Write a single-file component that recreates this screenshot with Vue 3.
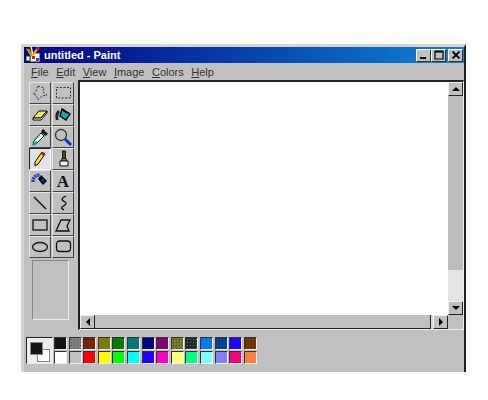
<script setup>
const menus = ['File', 'Edit', 'View', 'Image', 'Colors', 'Help']

const tools = ['free', 'select', 'eraser', 'fill', 'dropper', 'zoom', 'pencil', 'brush', 'spray', 'text', 'line', 'curve', 'rect', 'poly', 'ellipse', 'round']

const colors = [
  { c: '#141414' }, { c: '#808080', d: '#555' }, { c: '#7b2200' }, { c: '#7d7a10' }, { c: '#007c00' },
  { c: '#007878' }, { c: '#000080' }, { c: '#800070' }, { c: '#787820', d: '#444' }, { c: '#1c2c2c', d: '#3f7a7a' },
  { c: '#0078f0' }, { c: '#003f90', d: '#1060b0' }, { c: '#2000ff' }, { c: '#6a3000', d: '#a84800' },
  { c: '#ffffff' }, { c: '#c0c0c0' }, { c: '#ff0000' }, { c: '#ffff00' }, { c: '#00ff00' },
  { c: '#00ffff' }, { c: '#2000ff' }, { c: '#ff00c0' }, { c: '#ffff80' }, { c: '#00ff80' },
  { c: '#80ffff' }, { c: '#8080ff' }, { c: '#ff0080', d: '#a00050' }, { c: '#ff8040' }
]

const swatchStyle = (s) => {
  if (!s.d) return { backgroundColor: s.c }
  return {
    backgroundColor: s.c,
    backgroundImage: `radial-gradient(${s.d} 40%, transparent 45%)`,
    backgroundSize: '3px 3px'
  }
}
</script>

<template>
  <div class="page">
    <div class="window">
      <div class="titlebar">
        <svg class="app-icon" width="16" height="16" viewBox="0 0 16 16">
          <path d="M5 6h10v9H5z" fill="#fff" stroke="#222" />
          <path d="M2 1l5 8" stroke="#c8a000" stroke-width="2.600" />
          <path d="M1 1l4 0" stroke="#111" stroke-width="1.500" />
          <path d="M6 0l2 8" stroke="#f0e8c0" stroke-width="1.600" />
          <path d="M13 1L8 8" stroke="#d8b000" stroke-width="2.200" />
          <path d="M11 1l3-1 1 2-3 2z" fill="#d02020" />
          <path d="M1 9h4v5H1z" fill="#e8e8e8" stroke="#222" stroke-width=".8" />
          <rect x="7" y="9" width="3" height="3" fill="#d02020" />
          <rect x="11" y="11" width="3" height="3" fill="#1850c0" />
        </svg>
        <span class="title">untitled - Paint</span>
        <div class="caption-btns">
          <button class="cap"><svg width="10" height="10" viewBox="0 0 10 10"><rect x="1" y="7" width="6" height="2" fill="#000" /></svg></button>
          <button class="cap"><svg width="10" height="10" viewBox="0 0 10 10"><path d="M1 1h8v8H1z M1 2h8" fill="none" stroke="#000" stroke-width="1.200" /></svg></button>
          <button class="cap close"><svg width="10" height="10" viewBox="0 0 10 10"><path d="M1.500 1.500l7 7M8.500 1.500l-7 7" stroke="#000" stroke-width="1.800" /></svg></button>
        </div>
      </div>

      <div class="menubar">
        <span v-for="m in menus" :key="m" class="menu"><u>{{ m[0] }}</u>{{ m.slice(1) }}</span>
      </div>

      <div class="main">
        <div class="toolbar">
          <div class="tools">
            <button v-for="t in tools" :key="t" class="tool" :class="{ active: t === 'pencil' }">
              <span v-if="t === 'text'" class="text-tool">A</span>
              <svg v-else width="20" height="20" viewBox="0 0 20 20">
                <template v-if="t === 'free'">
                  <path d="M8 3l6 2-1 4 4 3-5 1-4 4-2-5-3-1 3-3z" fill="none" stroke="#333" stroke-dasharray="2 1.500" />
                </template>
                <template v-else-if="t === 'select'">
                  <rect x="3.500" y="4.500" width="14" height="10.500" fill="none" stroke="#333" stroke-dasharray="2 1.500" />
                </template>
                <template v-else-if="t === 'eraser'">
                  <path d="M3 13l6-7h8l-6 7z" fill="#ffee60" stroke="#000" />
                  <path d="M3 13v2h8l6-7V6l-6 7z" fill="#fff" stroke="#000" />
                </template>
                <template v-else-if="t === 'fill'">
                  <path d="M9 4l8 5-4 6-6-4z" fill="#00b0b8" stroke="#000" stroke-width="1.400" />
                  <path d="M9 4l5 4" stroke="#000" stroke-width="2" />
                  <path d="M5 5C2 8 2 12 3 15h2.500C5 12 5 9 7 7z" fill="#222" />
                </template>
                <template v-else-if="t === 'dropper'">
                  <path d="M13 2l5 5-3 2-4-4z" fill="#111" />
                  <path d="M11 6l3 3-8 8-3 1 1-4z" fill="#dff" stroke="#111" />
                  <path d="M3 18l4-3" stroke="#00b0a0" stroke-width="2.400" />
                </template>
                <template v-else-if="t === 'zoom'">
                  <circle cx="8" cy="8" r="5.500" fill="none" stroke="#333" stroke-width="1.300" />
                  <path d="M12 12l6 6" stroke="#1030c0" stroke-width="2.800" />
                </template>
                <template v-else-if="t === 'pencil'">
                  <path d="M12 3l3 2-7 10-3 2 0-4z" fill="#ffe040" stroke="#000" />
                  <path d="M12 3l3 2-1.500 2-3-2z" fill="#c02020" />
                </template>
                <template v-else-if="t === 'brush'">
                  <rect x="9.500" y="2" width="3" height="8" fill="#604800" stroke="#000" stroke-width=".8" />
                  <path d="M8.500 10h5v2h-5z" fill="#e0d020" stroke="#000" stroke-width=".8" />
                  <path d="M7 12h8v5H7z" fill="#f4f4f4" stroke="#000" />
                </template>
                <template v-else-if="t === 'spray'">
                  <path d="M3 11c0-4 2-7 7-7" fill="none" stroke="#3040c0" stroke-width="3.500" stroke-dasharray="2 .7" />
                  <path d="M11 4l6 6-4 4-5-6z" fill="#000" />
                  <path d="M12 7l3 3-2 2-2-3z" fill="#1030d0" />
                </template>
                <template v-else-if="t === 'line'">
                  <path d="M4 4l12 12" stroke="#111" stroke-width="1.400" />
                </template>
                <template v-else-if="t === 'curve'">
                  <path d="M13 3C8 5 8 7 12 9c2 1 1 3-3 5-1 1 0 2 2 3" fill="none" stroke="#111" stroke-width="1.300" />
                </template>
                <template v-else-if="t === 'rect'">
                  <rect x="3" y="5" width="14" height="10" fill="none" stroke="#111" stroke-width="1.300" />
                </template>
                <template v-else-if="t === 'poly'">
                  <path d="M8 5h9l-3 6 2 5H3z" fill="none" stroke="#111" stroke-width="1.300" />
                </template>
                <template v-else-if="t === 'ellipse'">
                  <ellipse cx="10" cy="10" rx="7.500" ry="4.500" fill="none" stroke="#111" stroke-width="1.300" />
                </template>
                <template v-else-if="t === 'round'">
                  <rect x="3.500" y="4" width="14" height="10.500" rx="3" fill="none" stroke="#111" stroke-width="1.300" />
                </template>
              </svg>
            </button>
          </div>
          <div class="tool-options"></div>
        </div>

        <div class="canvas-frame">
          <div class="canvas"></div>
          <div class="vscroll">
            <button class="sb-btn"><i class="arrow up"></i></button>
            <div class="sb-thumb"></div>
            <div class="sb-track"></div>
            <button class="sb-btn"><i class="arrow down"></i></button>
          </div>
          <div class="hscroll">
            <button class="sb-btn"><i class="arrow left"></i></button>
            <div class="sb-thumb"></div>
            <button class="sb-btn"><i class="arrow right"></i></button>
          </div>
          <div class="corner"></div>
        </div>
      </div>

      <div class="palette">
        <div class="current">
          <span class="bg-color"></span>
          <span class="fg-color"></span>
        </div>
        <div class="swatches">
          <span v-for="(s, i) in colors" :key="i" class="swatch" :style="swatchStyle(s)"></span>
        </div>
      </div>
    </div>
  </div>
</template>

<style scoped>
.page {
  width: 488px;
  height: 400px;
  box-sizing: border-box;
  padding: 44px 0 0 21px;
  background: #fff;
  font-family: "Liberation Sans", Arial, sans-serif;
}

.window {
  width: 445px;
  height: 328px;
  box-sizing: border-box;
  display: flex;
  flex-direction: column;
  background: #c0c0c0;
  border-top: 3px solid #d4d4d4;
  border-left: 3px solid #d4d4d4;
  border-right: 2px solid #222;
}

button {
  padding: 0;
  margin: 0;
  font: inherit;
  display: flex;
  align-items: center;
  justify-content: center;
}

.titlebar {
  height: 16px;
  flex: none;
  display: flex;
  align-items: center;
  background: linear-gradient(to right, #000080, #1084d0);
}

.app-icon {
  margin-left: 1px;
  flex: none;
}

.title {
  margin-left: 3px;
  color: #fff;
  font-size: 11px;
  font-weight: bold;
}

.caption-btns {
  margin-left: auto;
  margin-right: 1px;
  display: flex;
  align-items: center;
}

.cap {
  width: 15px;
  height: 13px;
  box-sizing: border-box;
  background: #c0c0c0;
  border: 1px solid;
  border-color: #fff #333 #333 #fff;
}

.close {
  margin-left: 2px;
}

.menubar {
  height: 17px;
  flex: none;
  display: flex;
  align-items: center;
  gap: 7.500px;
  padding-left: 7px;
  font-size: 11px;
  color: #333;
}

.main {
  flex: 1;
  min-height: 0;
  display: flex;
}

.toolbar {
  width: 54px;
  flex: none;
  box-sizing: border-box;
  padding: 2px 0 0 5px;
}

.tools {
  display: grid;
  grid-template-columns: 22px 22px;
  grid-auto-rows: 22px;
  gap: 0 1px;
}

.tool {
  box-sizing: border-box;
  background: #c0c0c0;
  border: 1px solid;
  border-color: #e4e4e4 #444 #444 #e4e4e4;
}

.tool.active {
  background: #e2e2e2;
  border-color: #222 #fff #fff #222;
}

.text-tool {
  font-family: "Liberation Serif", serif;
  font-weight: bold;
  font-size: 17px;
  line-height: 1;
  color: #111;
}

.tool-options {
  width: 37px;
  height: 60px;
  box-sizing: border-box;
  margin: 2px 0 0 3px;
  border: 1px solid;
  border-color: #888 #eee #eee #888;
}

.canvas-frame {
  flex: 1;
  min-width: 0;
  box-sizing: border-box;
  display: grid;
  grid-template-columns: 1fr 15px;
  grid-template-rows: 1fr 14px;
  border-top: 2px solid #222;
  border-left: 2px solid #222;
  border-right: 1px solid #eee;
  border-bottom: 1px solid #eee;
}

.canvas {
  background: #fff;
  min-height: 0;
}

.vscroll {
  display: flex;
  flex-direction: column;
  background-color: #e4e4e4;
  background-image: radial-gradient(#c0c0c0 40%, transparent 45%);
  background-size: 2px 2px;
  min-height: 0;
}

.hscroll {
  display: flex;
  background: #dcdcdc;
  min-width: 0;
}

.corner {
  background: #c0c0c0;
}

.sb-btn {
  width: 15px;
  height: 14px;
  flex: none;
  box-sizing: border-box;
  background: #c0c0c0;
  border: 1px solid;
  border-color: #eee #222 #222 #eee;
}

.vscroll .sb-thumb {
  height: 174px;
  background: #bcbcbc;
  flex: none;
}

.sb-track {
  flex: 1;
}

.hscroll .sb-thumb {
  flex: 1;
  background: #c0c0c0;
  border-right: 1px solid #222;
  border-bottom: 1px solid #222;
  margin-right: 2px;
}

.arrow {
  display: block;
  width: 0;
  height: 0;
  border: 4px solid transparent;
}

.arrow.up {
  border-bottom-color: #000;
  border-top-width: 0;
}

.arrow.down {
  border-top-color: #000;
  border-bottom-width: 0;
}

.arrow.left {
  border-right-color: #000;
  border-left-width: 0;
}

.arrow.right {
  border-left-color: #000;
  border-right-width: 0;
}

.palette {
  height: 42px;
  flex: none;
  display: flex;
  align-items: flex-start;
  padding: 7px 0 0 2px;
  box-sizing: border-box;
}

.current {
  width: 27px;
  height: 27px;
  flex: none;
  box-sizing: border-box;
  position: relative;
  background-color: #eee;
  background-image: radial-gradient(#c0c0c0 40%, transparent 45%);
  background-size: 2px 2px;
  border: 1px solid;
  border-color: #222 #eee #eee #222;
}

.fg-color {
  position: absolute;
  left: 3px;
  top: 4px;
  width: 11px;
  height: 11px;
  background: #141414;
  border: 1px solid #888;
  z-index: 1;
}

.bg-color {
  position: absolute;
  left: 10px;
  top: 11px;
  width: 11px;
  height: 11px;
  background: #fff;
  border: 1px solid #888;
}

.swatches {
  margin-left: 1px;
  display: grid;
  grid-template-columns: repeat(14, 13px);
  grid-auto-rows: 13px;
  gap: 1px 1.600px;
}

.swatch {
  box-sizing: border-box;
  border: 1px solid;
  border-color: #333 #eee #eee #333;
}
</style>
